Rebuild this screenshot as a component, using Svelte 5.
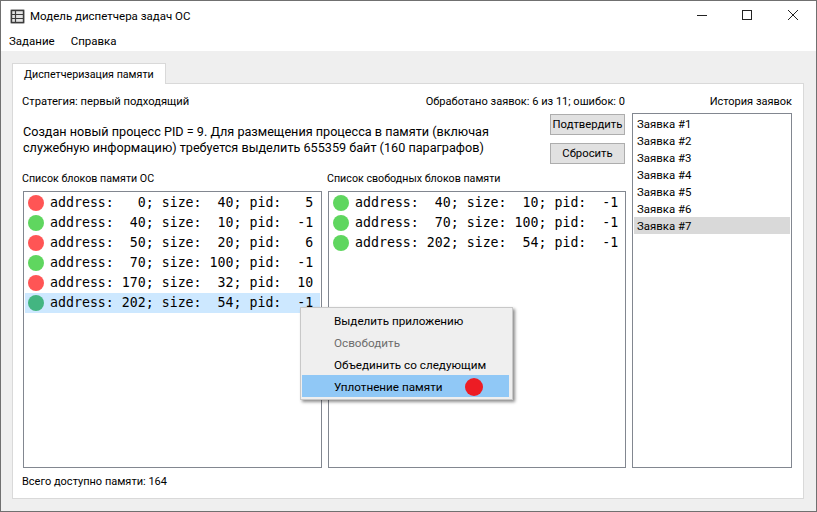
<script lang="ts">
	const blocks = [
		{ address: 0, size: 40, pid: 5 },
		{ address: 40, size: 10, pid: -1 },
		{ address: 50, size: 20, pid: 6 },
		{ address: 70, size: 100, pid: -1 },
		{ address: 170, size: 32, pid: 10 },
		{ address: 202, size: 54, pid: -1 }
	];
	const freeBlocks = blocks.filter((b) => b.pid === -1);
	const history = [1, 2, 3, 4, 5, 6, 7];
	const selectedBlock = 5;
	const selectedRequest = 7;

	function pad(v: number, n = 3) {
		return String(v).padStart(n, ' ');
	}

	function blockText(b: { address: number; size: number; pid: number }) {
		return `address: ${pad(b.address)}; size: ${pad(b.size)}; pid: ${pad(b.pid)}`;
	}
</script>

{#snippet blockList(items, selected)}
	<div class="list">
		{#each items as b, i}
			<div class="block" class:selected={i === selected}>
				<span class="dot" class:free={b.pid === -1}></span>
				<span class="mono">{blockText(b)}</span>
			</div>
		{/each}
	</div>
{/snippet}

<div class="window">
	<header class="titlebar">
		<svg class="app-icon" width="15" height="15" viewBox="0 0 15 15">
			<rect x="0" y="0" width="15" height="15" rx="2" fill="#c9c9c9" />
			<rect x="1.5" y="1.5" width="12" height="12" fill="#e4e4e4" stroke="#3c3c3c" stroke-width="1.4" />
			<path d="M2 5.5h11M2 9.5h11M5.5 2v11" stroke="#3c3c3c" stroke-width="1.2" fill="none" />
		</svg>
		<span class="title">Модель диспетчера задач ОС</span>
		<div class="controls">
			<svg width="10" height="10" viewBox="0 0 10 10"><path d="M0 5.5h10" stroke="#222" /></svg>
			<svg width="10" height="10" viewBox="0 0 10 10"><rect x="0.5" y="0.5" width="9" height="9" fill="none" stroke="#222" /></svg>
			<svg class="close" width="10" height="10" viewBox="0 0 10 10"><path d="M0 0l10 10M10 0L0 10" stroke="#222" /></svg>
		</div>
	</header>

	<nav class="menubar">
		<span>Задание</span>
		<span>Справка</span>
	</nav>

	<main class="body">
		<div class="tab">Диспетчеризация памяти</div>
		<section class="pane">
			<div class="left">
				<div class="status">
					<span class="strategy">Стратегия: первый подходящий</span>
					<span>Обработано заявок: 6 из 11; ошибок: 0</span>
				</div>
				<div class="message">
					<p>
						Создан новый процесс PID = 9. Для размещения процесса в памяти (включая
						служебную информацию) требуется выделить 655359 байт (160 параграфов)
					</p>
					<div class="buttons">
						<button>Подтвердить</button>
						<button>Сбросить</button>
					</div>
				</div>
				<div class="lists">
					<div class="col">
						<div class="label">Список блоков памяти ОС</div>
						{@render blockList(blocks, selectedBlock)}
					</div>
					<div class="col">
						<div class="label">Список свободных блоков памяти</div>
						{@render blockList(freeBlocks, -1)}
					</div>
				</div>
				<div class="total">Всего доступно памяти: 164</div>
			</div>

			<div class="right">
				<div class="history-label">История заявок</div>
				<div class="history">
					{#each history as n}
						<div class="request" class:current={n === selectedRequest}>Заявка #{n}</div>
					{/each}
				</div>
			</div>
		</section>

		<div class="menu">
			<div class="item">Выделить приложению</div>
			<div class="item disabled">Освободить</div>
			<div class="item">Объединить со следующим</div>
			<div class="item active">Уплотнение памяти</div>
			<span class="cursor"></span>
		</div>
	</main>
</div>

<style>
	:global(body) {
		margin: 0;
		background: #fff;
	}

	.window {
		box-sizing: border-box;
		width: 817px;
		height: 512px;
		border: 1px solid #707070;
		display: flex;
		flex-direction: column;
		font-family: Roboto, 'Noto Sans', sans-serif;
		font-size: 11px;
		color: #000;
		background: #fff;
		overflow: hidden;
	}

	.titlebar {
		height: 29px;
		flex: none;
		display: flex;
		align-items: center;
		padding-left: 9px;
	}

	.app-icon {
		margin-top: 1px;
	}

	.title {
		margin-left: 5px;
		font-size: 11.5px;
	}

	.controls {
		margin-left: auto;
		margin-bottom: 1px;
		display: flex;
		align-items: center;
		gap: 35px;
		padding-right: 18px;
	}

	.controls svg {
		display: block;
	}

	.controls .close {
		margin-left: 1px;
	}

	.menubar {
		height: 21px;
		flex: none;
		display: flex;
		align-items: center;
		gap: 16px;
		padding-left: 8px;
		font-size: 11.5px;
	}

	.body {
		position: relative;
		flex: 1;
		background: #efefef;
		padding: 12px 12px 12px 11px;
		display: flex;
		flex-direction: column;
		min-height: 0;
	}

	.tab {
		box-sizing: border-box;
		align-self: flex-start;
		width: 154px;
		height: 21px;
		margin-bottom: -1px;
		background: #fff;
		border: 1px solid #d9d9d9;
		border-bottom: none;
		padding-left: 11px;
		line-height: 21px;
		font-size: 10.7px;
		white-space: nowrap;
		position: relative;
		z-index: 1;
	}

	.pane {
		flex: 1;
		min-height: 0;
		background: #fff;
		border: 1px solid #d9d9d9;
		display: flex;
		gap: 6px;
		padding: 10px 11px 10px 9px;
	}

	.left {
		flex: 1;
		display: flex;
		flex-direction: column;
		min-width: 0;
	}

	.status {
		height: 14px;
		line-height: 16px;
		display: flex;
		justify-content: space-between;
		padding-right: 1px;
		flex: none;
		font-size: 11.05px;
	}

	.strategy {
		font-size: 11.2px;
	}

	.message {
		display: flex;
		justify-content: space-between;
		height: 64px;
		flex: none;
		padding-top: 6px;
		padding-left: 1px;
		box-sizing: border-box;
	}

	.message p {
		margin: 0;
		padding-top: 10px;
		width: 500px;
		font-size: 12.65px;
		line-height: 16px;
	}

	.buttons {
		display: flex;
		flex-direction: column;
		gap: 8px;
		padding-right: 1px;
	}

	.buttons button {
		box-sizing: border-box;
		width: 75px;
		height: 21px;
		padding: 0;
		background: #e1e1e1;
		border: 1px solid #adadad;
		border-radius: 0;
		font: inherit;
		font-size: 11.3px;
		color: #000;
	}

	.lists {
		flex: 1;
		min-height: 0;
		display: grid;
		grid-template-columns: 299px 298px;
		gap: 6px;
		padding-left: 1px;
	}

	.col {
		display: flex;
		flex-direction: column;
		min-height: 0;
	}

	.label {
		height: 19px;
		line-height: 13px;
		margin-left: -1px;
		font-size: 10.7px;
		flex: none;
	}

	.list {
		flex: 1;
		border: 1px solid #828790;
		padding: 1px;
		background: #fff;
	}

	.block {
		height: 20px;
		display: flex;
		align-items: center;
		padding-left: 3px;
	}

	.block.selected {
		background: #cde8ff;
	}

	.dot {
		width: 16px;
		height: 16px;
		border-radius: 50%;
		background: #ff5555;
		flex: none;
	}

	.dot.free {
		background: #5fd65f;
	}

	.selected .dot {
		background: #43b581;
	}

	.mono {
		margin-left: 6px;
		margin-bottom: 2px;
		font-family: 'DejaVu Sans Mono', monospace;
		font-size: 13.25px;
		white-space: pre;
	}

	.total {
		height: 30px;
		line-height: 28px;
		margin-bottom: -10px;
		flex: none;
	}

	.right {
		width: 160px;
		flex: none;
		display: flex;
		flex-direction: column;
	}

	.history-label {
		height: 19px;
		line-height: 16px;
		text-align: right;
		flex: none;
	}

	.history {
		box-sizing: border-box;
		height: 355px;
		border: 1px solid #828790;
		padding: 1px;
		font-size: 11.4px;
	}

	.request {
		height: 17px;
		line-height: 18px;
		padding-left: 3px;
	}

	.request.current {
		background: #d9d9d9;
	}

	.menu {
		position: absolute;
		left: 299px;
		top: 256px;
		box-sizing: border-box;
		width: 213px;
		height: 93px;
		background: #efefef;
		border: 1px solid #c8c8c8;
		padding: 1px;
		box-shadow: 2px 2px 3px rgba(0, 0, 0, 0.45);
		z-index: 2;
		font-size: 11.7px;
	}

	.item {
		height: 22px;
		line-height: 24px;
		padding-left: 32px;
		margin-right: 2px;
	}

	.item.disabled {
		color: #6d6d6d;
	}

	.item.active {
		background: #90c8f6;
	}

	.cursor {
		position: absolute;
		left: 164px;
		top: 70px;
		width: 18px;
		height: 18px;
		border-radius: 50%;
		background: #ed1c24;
	}
</style>
